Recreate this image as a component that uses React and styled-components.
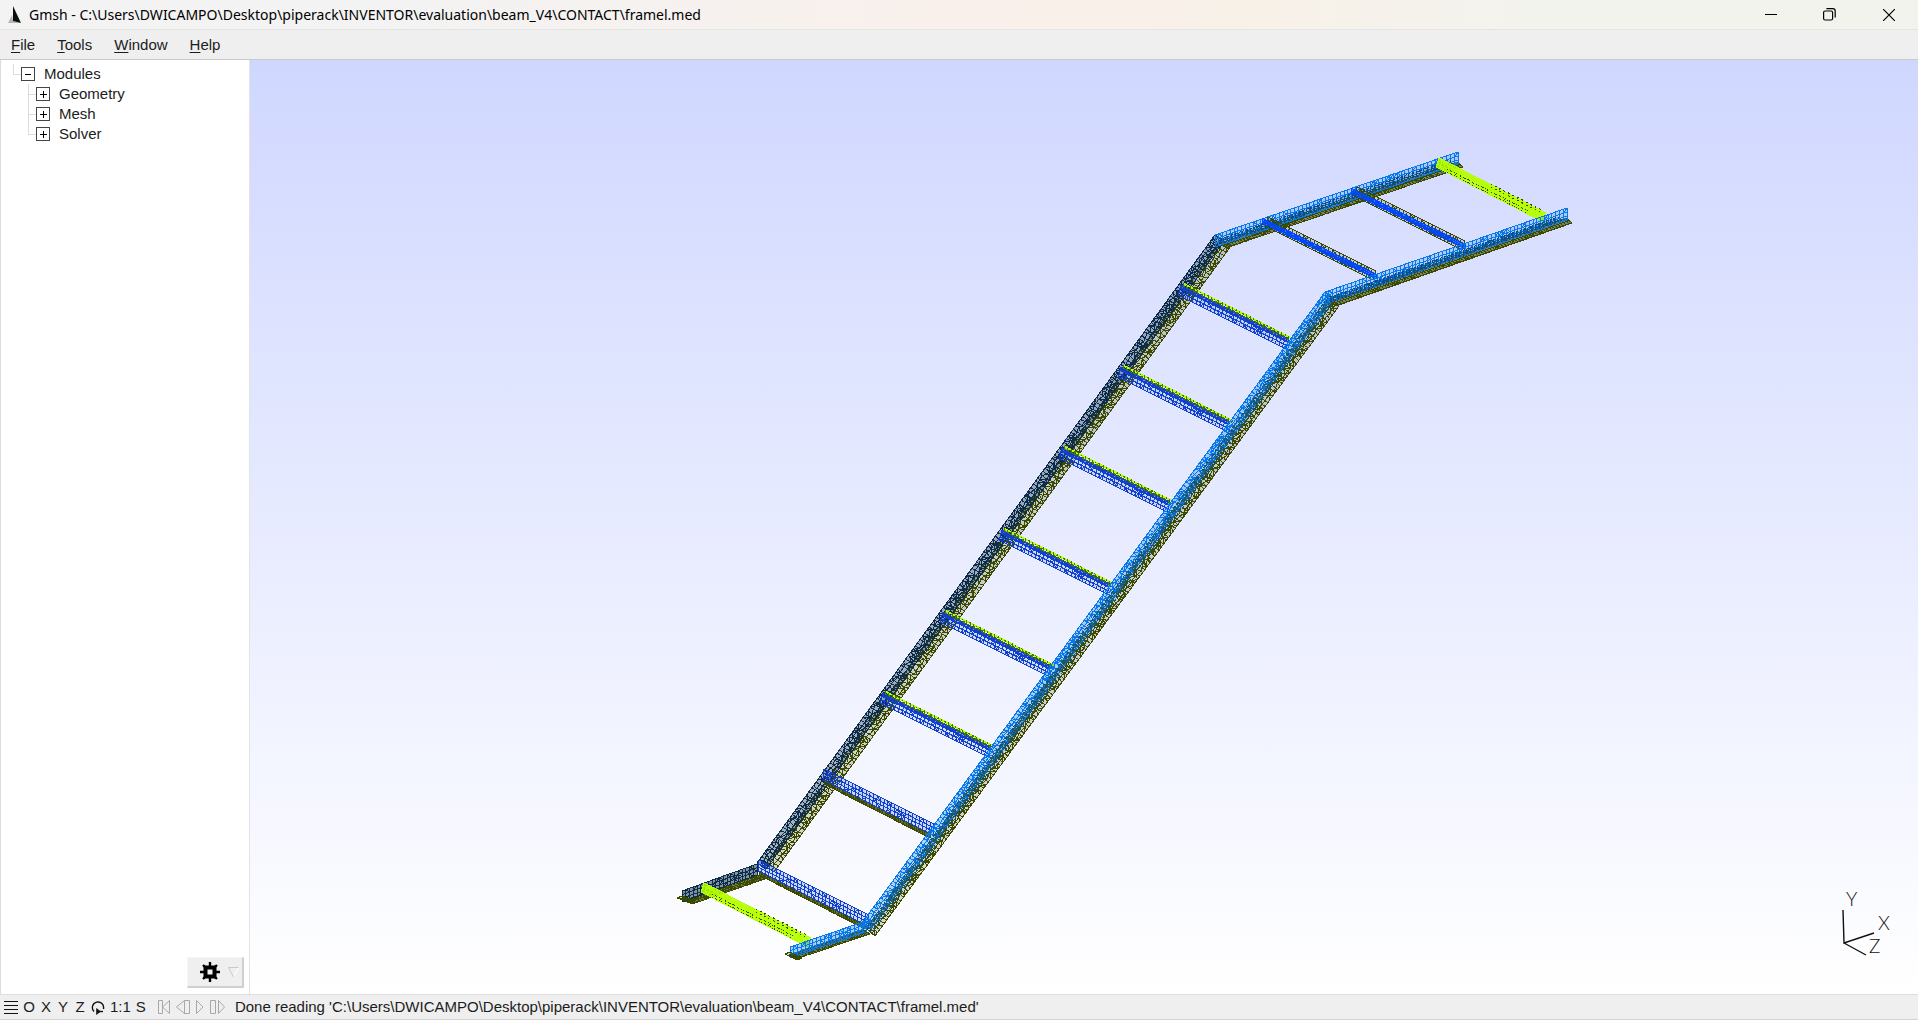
import React, { useState } from 'react';
import styled, { createGlobalStyle } from 'styled-components';

const GlobalStyle = createGlobalStyle`
  * {
    box-sizing: border-box;
  }
  html, body, #root {
    height: 100%;
    margin: 0;
  }
  body {
    font-family: "Liberation Sans", Arial, sans-serif;
    font-size: 15px;
    color: #1c1c1c;
    background: #efefef;
    overflow: hidden;
  }
  button {
    font: inherit;
    color: inherit;
    background: none;
    border: 0;
    padding: 0;
  }
`;

const AppWindow = styled.div`
  display: flex;
  flex-direction: column;
  height: 100%;
`;

const TitleBar = styled.header`
  display: flex;
  align-items: center;
  flex: none;
  height: 29px;
  padding-left: 8px;
  background: linear-gradient(90deg, #f3f3f3 0%, #f3f3f3 20%, #f9f0eb 50%, #f8f1e8 65%, #f3f3ee 80%, #f3f3ee 100%);
`;

const Title = styled.h1`
  flex: 1;
  margin: 0 0 0 5px;
  font-family: "Noto Sans", "Open Sans", sans-serif;
  font-size: 14px;
  font-weight: 400;
  line-height: 28px;
  color: #000;
  white-space: nowrap;
`;

const WindowButton = styled.button`
  display: flex;
  align-items: center;
  justify-content: center;
  width: 59px;
  height: 28px;
`;

const MenuBar = styled.nav`
  display: flex;
  align-items: center;
  flex: none;
  gap: 22px;
  height: 31px;
  padding-left: 11px;
  background: #efefef;
  border-top: 1px solid #e4e4e0;
  border-bottom: 1px solid #c9c9c9;
`;

const MenuButton = styled.button`
  line-height: 20px;
`;

const Key = styled.span`
  text-decoration: underline;
  text-underline-offset: 2px;
`;

const Main = styled.main`
  display: flex;
  flex: 1;
  min-height: 0;
`;

const Sidebar = styled.aside`
  display: flex;
  flex-direction: column;
  justify-content: space-between;
  flex: none;
  width: 250px;
  padding: 4px 5px 6px 1px;
  background: #fff;
  border-right: 1px solid #e3e3e3;
  border-left: 1px solid #dcdcdc;
`;

const Tree = styled.ul`
  margin: 0;
  padding: 0 0 0 ${({ $indent }) => $indent}px;
  list-style: none;
`;

const TreeRow = styled.div`
  display: flex;
  align-items: center;
  height: 20px;
  line-height: 20px;
`;

const Branch = styled.span`
  width: 8px;
  height: 20px;
  background:
    linear-gradient(#dcdcdc, #dcdcdc) 0 0 / 1px ${({ $last }) => ($last ? '11px' : '20px')} no-repeat,
    linear-gradient(#dcdcdc, #dcdcdc) 0 10px / 8px 1px no-repeat;
`;

const Toggle = styled.button`
  display: flex;
  width: 14px;
  height: 14px;
  margin-right: 9px;
`;

const GearButton = styled.button`
  display: flex;
  align-items: center;
  align-self: flex-end;
  gap: 8px;
  width: 57px;
  height: 31px;
  padding-left: 12px;
  background: #efefef;
  border: 1px solid #f6f6f6;
  border-right: 2px solid #cfcfcf;
  border-bottom: 2px solid #cfcfcf;
`;

const Viewport = styled.section`
  flex: 1;
  min-width: 0;
  background: linear-gradient(#d0d7ff, #ffffff);
`;

const Scene = styled.svg`
  display: block;
  width: 100%;
  height: 100%;
`;

const AxisLabel = styled.text`
  font-family: Lato, sans-serif;
  font-size: 19px;
  font-weight: 300;
  fill: #111;
`;

const StatusBar = styled.footer`
  display: flex;
  align-items: center;
  flex: none;
  height: 26px;
  padding: 0 4px;
  background: #efefef;
  border-top: 1px solid #dedede;
  border-bottom: 1px solid #d2d2d2;
  white-space: nowrap;
`;

const StatusTools = styled.div`
  display: flex;
  align-items: center;
  gap: 5px;
`;

const StatusButton = styled.button`
  display: flex;
  align-items: center;
  justify-content: center;
  min-width: 10px;
  line-height: 22px;
`;

const AxisButton = styled(StatusButton)`
  width: 12px;
`;

const PlayTools = styled.div`
  display: flex;
  align-items: center;
  gap: 5px;
  margin: 0 10px 0 11px;
`;

const StatusText = styled.output`
  line-height: 22px;
`;

const FILE_NAME = 'C:\\Users\\DWICAMPO\\Desktop\\piperack\\INVENTOR\\evaluation\\beam_V4\\CONTACT\\framel.med';

const AZURE = '#0678ec';
const STEEL = '#0c4c80';
const NAVY = '#0c2c48';
const OLIVE = '#3c4a00';
const ROYAL = '#1040d0';
const BLUE = '#0048ff';
const LIME = '#b4ff00';

// small deterministic noise, so that the mesh looks the same on every render
const noise = (n) => {
  const v = Math.sin(n * 127.1 + 11.7) * 43758.5453;
  return v - Math.floor(v);
};

// builds the triangulated wire mesh of one flange: an edge from -> to, swept by `sweep`
const meshPath = ({ from, to, sweep, cell = 4, rows = 3, jitter = 0, diagonals = 0.5 }) => {
  const length = Math.hypot(to[0] - from[0], to[1] - from[1]);
  const steps = Math.round(length / cell);
  const point = (i, j) => {
    const seed = i * 17 + j * 5 + from[0];
    const inner = i > 0 && i < steps && j > 0 && j < rows;
    const dx = inner ? (noise(seed) - 0.5) * jitter : 0;
    const dy = inner ? (noise(seed + 3) - 0.5) * jitter : 0;
    const x = from[0] + ((to[0] - from[0]) * i) / steps + (sweep[0] * j) / rows + dx;
    const y = from[1] + ((to[1] - from[1]) * i) / steps + (sweep[1] * j) / rows + dy;
    return `${x.toFixed(1)} ${y.toFixed(1)}`;
  };
  let d = '';
  for (let i = 0; i <= steps; i++) {
    for (let j = 0; j <= rows; j++) {
      if (i < steps) d += `M${point(i, j)}L${point(i + 1, j)}`;
      if (j < rows) d += `M${point(i, j)}L${point(i, j + 1)}`;
      if (i < steps && j < rows && noise(i * 3 + j) < diagonals) {
        d += noise(i + j * 7) > 0.5
          ? `M${point(i, j)}L${point(i + 1, j + 1)}`
          : `M${point(i + 1, j)}L${point(i, j + 1)}`;
      }
    }
  }
  return d;
};

const rungStarts = [
  [1181, 283], [1121, 365], [1062, 446], [1002, 528], [943, 610], [883, 691],
];

const rungs = rungStarts.flatMap(([x, y]) => [
  { from: [x, y + 2], to: [x + 108, y + 56], sweep: [-3, 10], color: ROYAL, rows: 3, diagonals: 0.2, tint: 0.12 },
  { from: [x, y + 3], to: [x + 108, y + 57], sweep: [0, 2], color: ROYAL, cell: 3, rows: 1, tint: 0.4 },
  { from: [x + 2, y + 1], to: [x + 110, y + 56], sweep: [0, 2], color: '#4c7800', cell: 4, rows: 1, tint: 0, dash: '2 2' },
  { from: [x + 2, y], to: [x + 111, y + 55], sweep: [0, 1], color: LIME, cell: 4, rows: 1, tint: 0.6 },
  { from: [x + 2, y], to: [x + 111, y + 55], sweep: [0, 1], color: '#4c7800', cell: 4, rows: 1, tint: 0, dash: '1 3' },
]);

const lowRungs = [[824, 769], [759, 860]].flatMap(([x, y]) => [
  { from: [x, y + 11], to: [x + 106, y + 65], sweep: [0, 4], color: OLIVE, cell: 3, rows: 1, tint: 0.8 },
  { from: [x, y], to: [x + 110, y + 55], sweep: [-1, 11], color: ROYAL, rows: 3, diagonals: 0.2, tint: 0.18 },
]);

const topBars = [[1264, 218], [1353, 188]].flatMap(([x, y]) => [
  { from: [x + 4, y - 1], to: [x + 112, y + 53], sweep: [-3, 9], color: OLIVE, cell: 4, rows: 3, diagonals: 0.2, tint: 0.15 },
  { from: [x - 2, y], to: [x + 112, y + 56], sweep: [0, 5], color: BLUE, cell: 3, rows: 2, tint: 0.6 },
]);

const limeBars = [[1437, 158], [702, 883]].flatMap(([x, y]) => [
  { from: [x + 2, y], to: [x + 109, y + 55], sweep: [-3, 9], color: LIME, cell: 4, rows: 3, tint: 0.85 },
  { from: [x + 54, y + 26], to: [x + 103, y + 51], sweep: [0, 3], color: OLIVE, cell: 5, rows: 1, diagonals: 0, tint: 0, dash: '1 3' },
  { from: [x + 10, y + 11], to: [x + 90, y + 52], sweep: [0, 3], color: OLIVE, cell: 5, rows: 1, diagonals: 0, tint: 0, dash: '1 2' },
]);

const flanges = [
  // rear rail
  { from: [1221, 240], to: [764, 866], sweep: [10, 6], color: OLIVE, jitter: 3, tint: 0.2 },
  { from: [1215, 235], to: [757, 863], sweep: [9, 6], color: NAVY, jitter: 3, tint: 0.35 },
  { from: [685, 900], to: [758, 875], sweep: [7, 4], color: OLIVE, cell: 3, rows: 2, tint: 0.7 },
  { from: [682, 891], to: [757, 864], sweep: [0, 11], color: NAVY, diagonals: 0.4, tint: 0.5 },
  { from: [1220, 243], to: [1457, 162], sweep: [6, 5], color: OLIVE, cell: 3, rows: 2, diagonals: 0.3, tint: 0.6 },
  { from: [1215, 235], to: [1458, 152], sweep: [0, 12], color: AZURE, diagonals: 0.2, tint: 0.2 },
  { from: [1220, 239], to: [1450, 160], sweep: [0, 5], color: STEEL, rows: 2, tint: 0.25, dash: '2 2' },
  // rungs and cross bars
  ...rungs,
  ...lowRungs,
  ...topBars,
  ...limeBars,
  // front rail
  { from: [1331, 299], to: [867, 929], sweep: [8, 7], color: OLIVE, jitter: 3, tint: 0.2 },
  { from: [1325, 292], to: [862, 923], sweep: [9, 6], color: AZURE, jitter: 3, tint: 0.3 },
  { from: [1329, 296], to: [867, 927], sweep: [6, 4], color: '#1c5468', cell: 5, rows: 2, jitter: 3, tint: 0.1, dash: '3 3' },
  { from: [790, 955], to: [864, 930], sweep: [6, 4], color: OLIVE, cell: 3, rows: 2, tint: 0.7 },
  { from: [790, 947], to: [866, 921], sweep: [0, 11], color: AZURE, diagonals: 0.4, tint: 0.35 },
  { from: [1330, 301], to: [1566, 218], sweep: [6, 5], color: OLIVE, cell: 3, rows: 2, diagonals: 0.3, tint: 0.6 },
  { from: [1325, 292], to: [1567, 208], sweep: [0, 12], color: AZURE, diagonals: 0.2, tint: 0.2 },
  { from: [1330, 297], to: [1558, 217], sweep: [0, 5], color: STEEL, rows: 2, tint: 0.25, dash: '2 2' },
  // open ends of the bottom flanges
  { from: [677, 898], to: [690, 903], sweep: [5, -2], color: OLIVE, cell: 3, rows: 1, tint: 0.2 },
  { from: [785, 954], to: [797, 960], sweep: [5, -2], color: OLIVE, cell: 3, rows: 1, tint: 0.2 },
];

function Flange({ shape }) {
  const { from, to, sweep, color, tint, dash } = shape;
  const outline = [
    from,
    to,
    [to[0] + sweep[0], to[1] + sweep[1]],
    [from[0] + sweep[0], from[1] + sweep[1]],
  ];
  return (
    <g shapeRendering="crispEdges">
      {tint > 0 && <polygon points={outline.join(' ')} fill={color} fillOpacity={tint} />}
      <path d={meshPath(shape)} fill="none" stroke={color} strokeWidth="1" strokeDasharray={dash} />
    </g>
  );
}

function Model() {
  return (
    <Scene viewBox="250 60 1668 934" role="img" aria-label="Mesh of the pipe rack frame">
      {flanges.map((shape, i) => (
        <Flange key={i} shape={shape} />
      ))}
      <g stroke="#111" strokeWidth="1.4" fill="none">
        <path d="M1843 910L1844 943L1874 933M1844 943L1866 955" />
      </g>
      <AxisLabel x="1846" y="906">Y</AxisLabel>
      <AxisLabel x="1878" y="930">X</AxisLabel>
      <AxisLabel x="1869" y="953">Z</AxisLabel>
    </Scene>
  );
}

function ToggleIcon({ open }) {
  return (
    <svg width="14" height="14" viewBox="0 0 14 14" shapeRendering="crispEdges">
      <rect x="0.5" y="0.5" width="13" height="13" fill="#fff" stroke="#444" />
      <path d={open ? 'M4 7.5H10' : 'M4 7.5H11M7.5 4V11'} stroke="#000" strokeWidth="1" />
    </svg>
  );
}

function LogoIcon() {
  return (
    <svg width="16" height="18" viewBox="0 0 16 18">
      <path d="M4 9L5 15L12 17H0Z" fill="#b4b4b4" />
      <path d="M5 0L13 17L5 15Z" fill="#0a0f08" />
    </svg>
  );
}

function GearIcon() {
  return (
    <svg width="20" height="20" viewBox="0 0 20 20">
      <path d="M10 0V20M0 10H20M3 3L17 17M17 3L3 17" stroke="#000" strokeWidth="2.4" />
      <rect x="5.5" y="5.5" width="9" height="9" fill="#efefef" stroke="#000" strokeWidth="4" />
    </svg>
  );
}

const modules = ['Geometry', 'Mesh', 'Solver'];

const menus = ['File', 'Tools', 'Window', 'Help'];

const playIcons = [
  { label: 'First step', width: 13, d: 'M1.5 1.5H5.5V14.5H1.5ZM12.5 1.5V14.5L5.5 8Z' },
  { label: 'Previous step', width: 15, d: 'M9.5 1.5V14.5L1.5 8ZM9.5 1.5H14.5V14.5H9.5Z' },
  { label: 'Play', width: 10, d: 'M1.5 1.5L8 8L1.5 14.5Z' },
  { label: 'Next step', width: 15, d: 'M0.5 1.5H5.5V14.5H0.5ZM8.5 1.5L14.5 8L8.5 14.5Z' },
];

function App() {
  const [open, setOpen] = useState(true);

  return (
    <AppWindow>
      <GlobalStyle />
      <TitleBar>
        <LogoIcon />
        <Title>Gmsh - {FILE_NAME}</Title>
        <WindowButton aria-label="Minimize">
          <svg width="12" height="12" viewBox="0 0 12 12"><path d="M0 5.5H12" stroke="#000" /></svg>
        </WindowButton>
        <WindowButton aria-label="Restore">
          <svg width="13" height="13" viewBox="0 0 13 13" fill="none" stroke="#000" strokeWidth="1.2">
            <rect x="0.6" y="3" width="9" height="9" rx="1.5" />
            <path d="M3.4 0.7H9.8Q12.2 0.7 12.2 3.2V9.6" />
          </svg>
        </WindowButton>
        <WindowButton aria-label="Close">
          <svg width="12" height="12" viewBox="0 0 12 12"><path d="M0 0L12 12M12 0L0 12" stroke="#000" strokeWidth="1.2" /></svg>
        </WindowButton>
      </TitleBar>
      <MenuBar>
        {menus.map((name) => (
          <MenuButton key={name}><Key>{name[0]}</Key>{name.slice(1)}</MenuButton>
        ))}
      </MenuBar>
      <Main>
        <Sidebar>
          <Tree $indent={11}>
            <li>
              <TreeRow>
                <Branch $last />
                <Toggle aria-label="Modules" aria-expanded={open} onClick={() => setOpen(!open)}>
                  <ToggleIcon open={open} />
                </Toggle>
                Modules
              </TreeRow>
              {open && (
                <Tree $indent={15}>
                  {modules.map((name, i) => (
                    <li key={name}>
                      <TreeRow>
                        <Branch $last={i === modules.length - 1} />
                        <Toggle aria-label={name} aria-expanded={false}><ToggleIcon /></Toggle>
                        {name}
                      </TreeRow>
                    </li>
                  ))}
                </Tree>
              )}
            </li>
          </Tree>
          <GearButton aria-label="Options">
            <GearIcon />
            <svg width="11" height="11" viewBox="0 0 11 11" fill="none">
              <path d="M10.5 0.5L5.5 10" stroke="#fff" />
              <path d="M10.5 0.5H0.5L5.5 10" stroke="#c8c8c8" />
            </svg>
          </GearButton>
        </Sidebar>
        <Viewport>
          <Model />
        </Viewport>
      </Main>
      <StatusBar>
        <StatusTools>
          <StatusButton aria-label="Menu">
            <svg width="14" height="15" viewBox="0 0 14 15" shapeRendering="crispEdges">
              <path d="M0 1H14M0 5H14M0 9H14M0 13H14" stroke="#111" strokeWidth="1" />
            </svg>
          </StatusButton>
          <AxisButton>O</AxisButton>
          <AxisButton>X</AxisButton>
          <AxisButton>Y</AxisButton>
          <AxisButton>Z</AxisButton>
          <StatusButton aria-label="Rotate">
            <svg width="14" height="15" viewBox="0 0 14 15" fill="none" stroke="#111" strokeWidth="1.4">
              <path d="M3 11.5A5.6 5.6 0 1 1 12.4 9" />
              <path d="M12 11.5H8" />
              <path d="M5.5 8.5L9.5 11.5L5.5 14.5Z" fill="#111" strokeWidth="0.6" />
            </svg>
          </StatusButton>
          <StatusButton>1:1</StatusButton>
          <StatusButton>S</StatusButton>
        </StatusTools>
        <PlayTools>
          {playIcons.map(({ label, width, d }) => (
            <StatusButton key={label} aria-label={label}>
              <svg width={width} height="16" viewBox={`0 0 ${width} 16`}>
                <path d={d} fill="none" stroke="#a8a8a8" />
              </svg>
            </StatusButton>
          ))}
        </PlayTools>
        <StatusText>Done reading '{FILE_NAME}'</StatusText>
      </StatusBar>
    </AppWindow>
  );
}

export default App;
